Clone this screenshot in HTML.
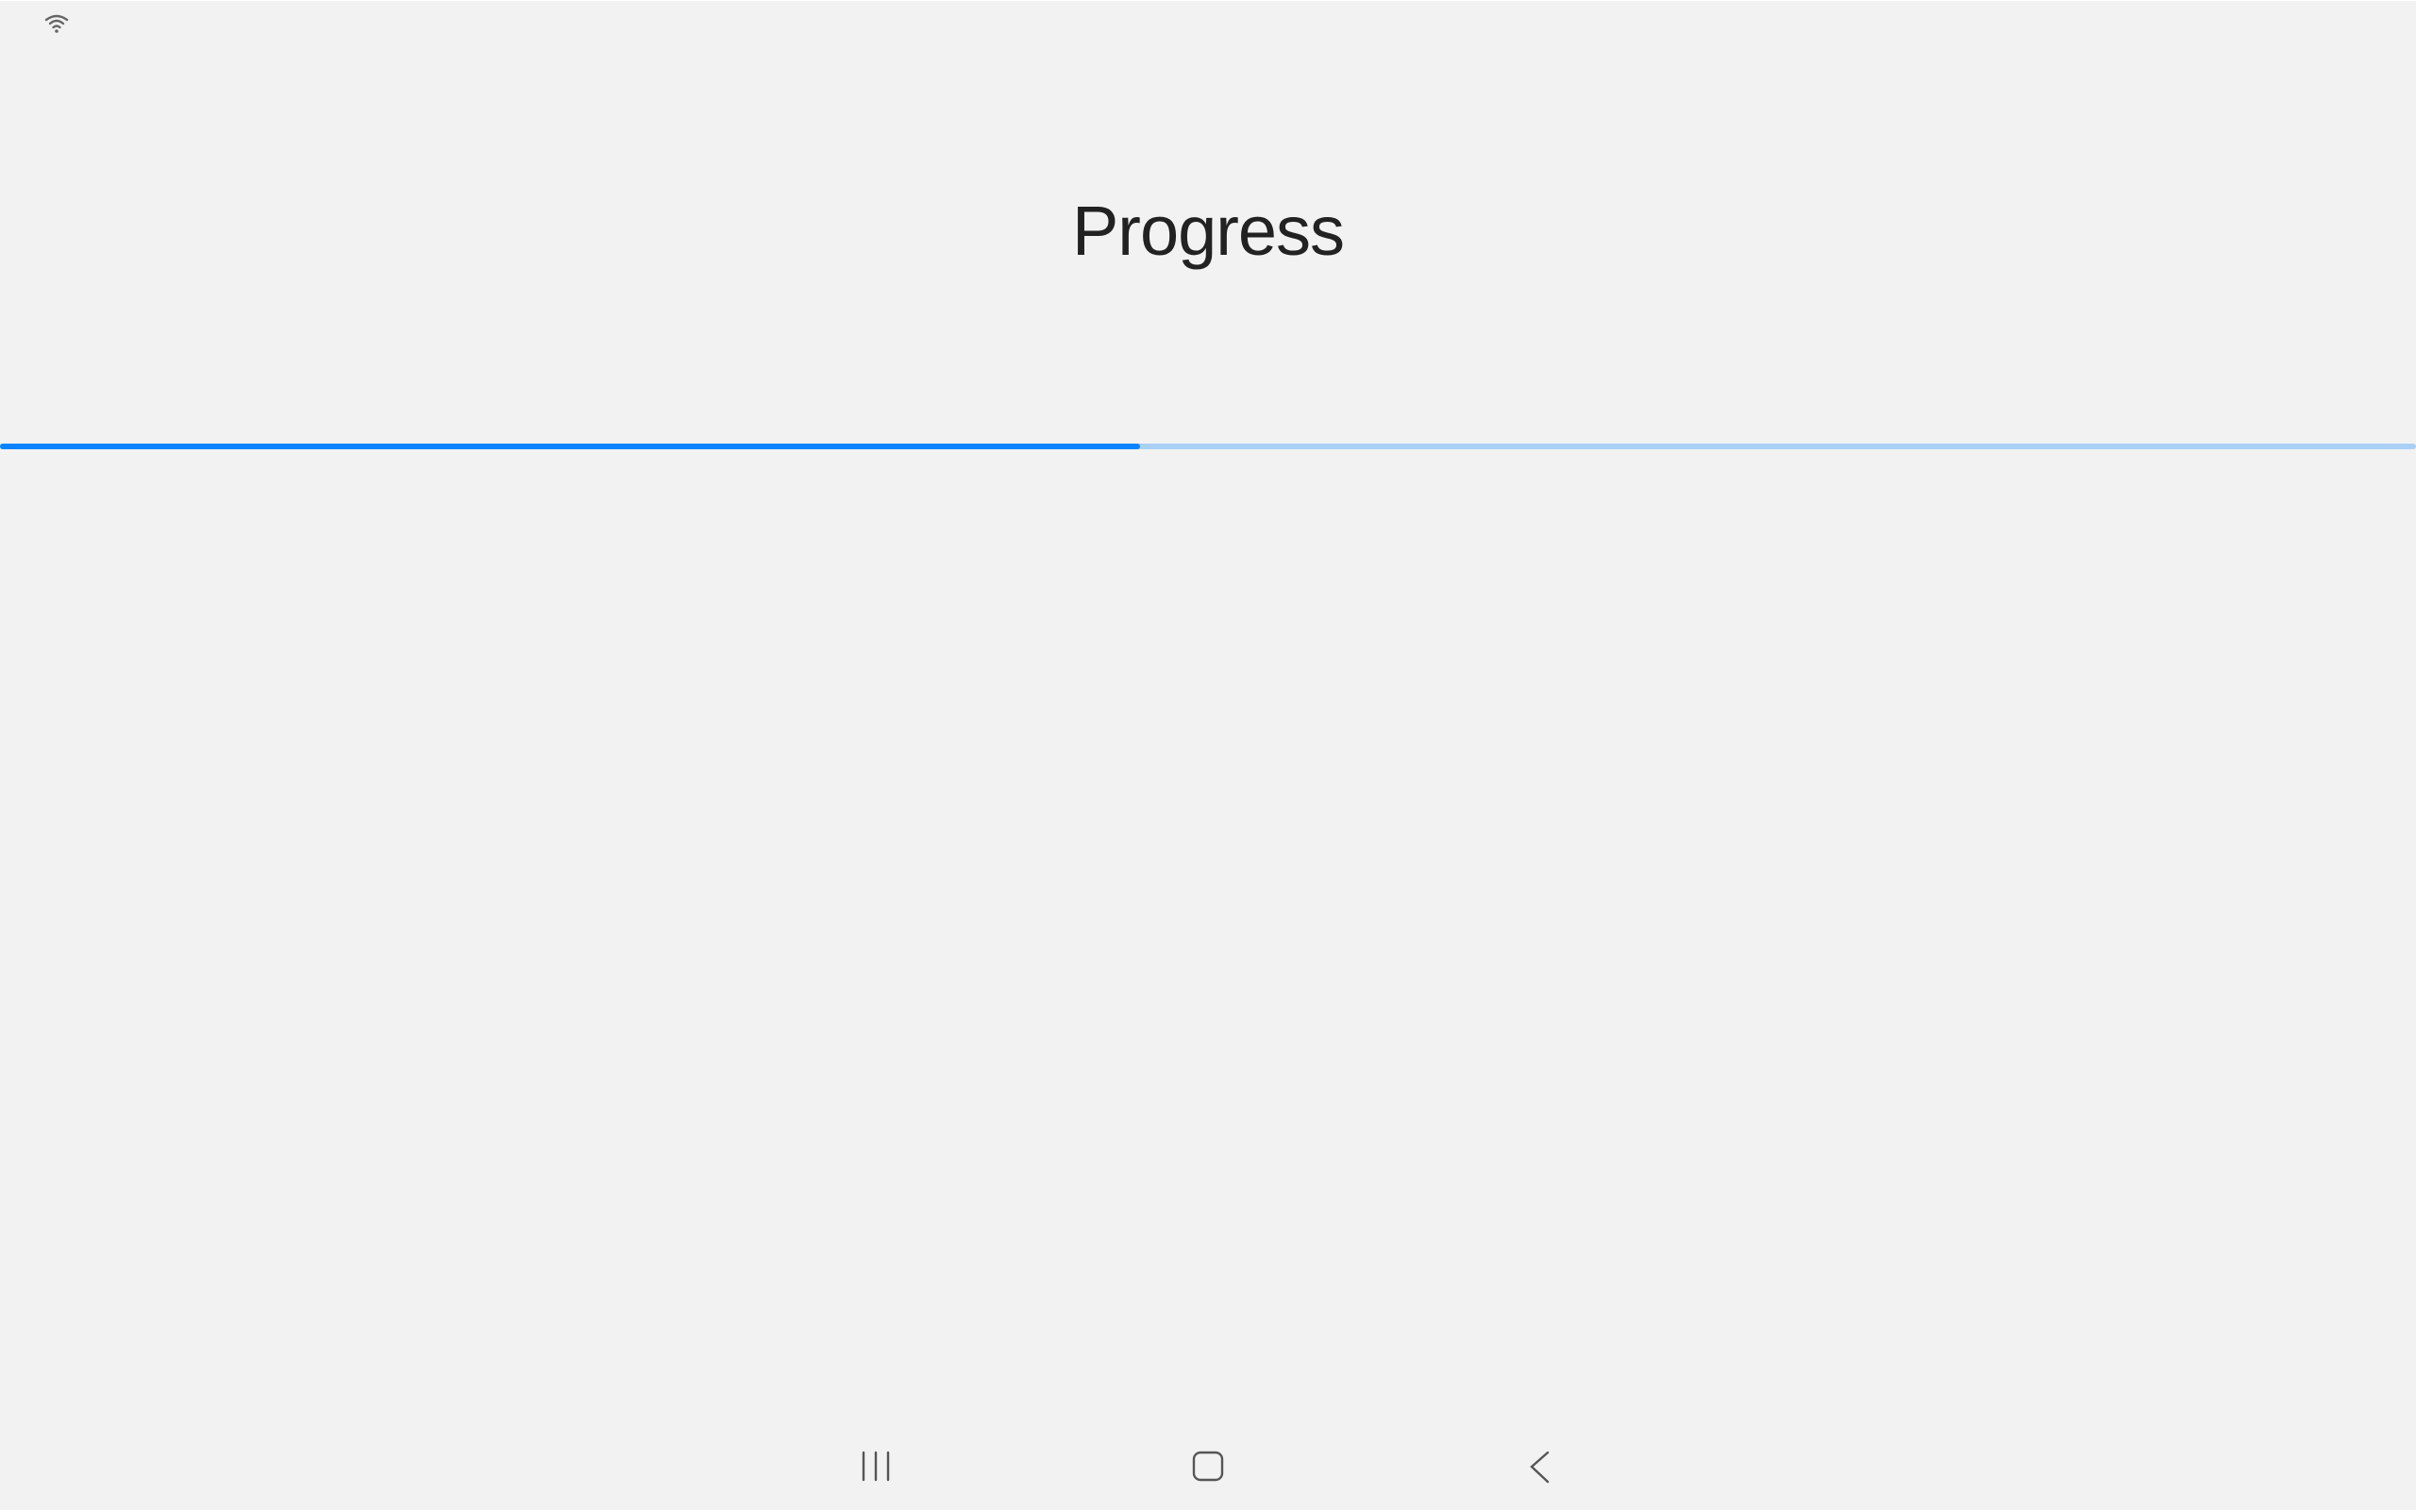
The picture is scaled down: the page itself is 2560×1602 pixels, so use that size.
<!DOCTYPE html>
<html><head><style>
html,body{margin:0;padding:0}
body{width:2560px;height:1602px;background:#f2f2f2;position:relative;overflow:hidden;font-family:"Liberation Sans",sans-serif}
.t{position:absolute;left:0;width:2560px;text-align:center;top:203px;font-size:74px;line-height:84px;color:#222;letter-spacing:-1px;font-weight:300}
.bar{position:absolute;top:470px;height:6px;border-radius:3px}
</style></head><body>
<svg style="position:absolute;left:46px;top:14px" width="28" height="22" viewBox="0 0 28 22"><g fill="none" stroke="#666" stroke-width="2.4" stroke-linecap="round"><path d="M3 7 Q14 -1 25 7"/><path d="M7 11 Q14 5 21 11"/><path d="M10.5 15 Q14 12 17.5 15"/></g><circle cx="14" cy="19" r="1.8" fill="#666"/></svg>
<div class="t">Progress</div>
<div class="bar" style="left:0;width:2560px;background:#a9d0f5"></div>
<div class="bar" style="left:0;width:1208px;background:#0a84ff"></div>
<svg style="position:absolute;left:0;top:1530px" width="2560" height="50"><g fill="none" stroke="#555" stroke-width="2.4" stroke-linecap="round"><path d="M915 9V38M928 9V38M941 9V38"/><rect x="1265" y="9" width="30" height="29" rx="7"/><path d="M1640 9L1623 24L1640 40"/></g></svg>
<div style="position:absolute;left:0;top:1600px;width:2560px;height:2px;background:#fff"></div>
<div style="position:absolute;left:0;top:0;width:2560px;height:1px;background:#fff"></div>
</body></html>
